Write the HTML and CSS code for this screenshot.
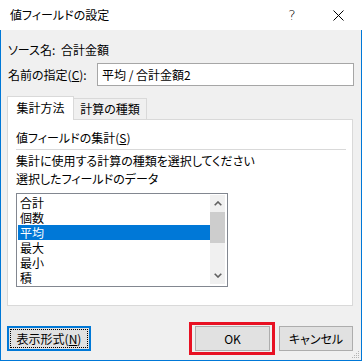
FILE: index.html
```html
<!DOCTYPE html>
<html lang="ja">
<head>
<meta charset="utf-8">
<title>値フィールドの設定</title>
<link rel="stylesheet" href="styles.css">
</head>
<body>
<div class="window">
  <div class="titlebar">
    <span class="title">値フィールドの設定</span>
    <span class="tb-btn help">?</span>
    <span class="tb-btn close">
      <svg width="11" height="11" viewBox="0 0 11 11"><path d="M0.5 0.5 L10.5 10.5 M10.5 0.5 L0.5 10.5" stroke="#000" stroke-width="1" fill="none"/></svg>
    </span>
  </div>
  <div class="body">
    <div class="row source"><span class="lbl-src">ソース名:</span><span>合計金額</span></div>
    <div class="row name"><span class="lbl-name">名前の指定(<u>C</u>):</span><div class="input">平均 / 合計金額2</div></div>
    <div class="tabs">
      <div class="tab active">集計方法</div>
      <div class="tab">計算の種類</div>
    </div>
    <div class="panel">
      <div class="group-title">値フィールドの集計(<u>S</u>)</div>
      <div class="sep"></div>
      <div class="text first">集計に使用する計算の種類を選択してください</div>
      <div class="text">選択したフィールドのデータ</div>
      <div class="listbox">
        <ul class="items">
          <li>合計</li>
          <li>個数</li>
          <li class="sel">平均</li>
          <li>最大</li>
          <li>最小</li>
          <li>積</li>
        </ul>
        <div class="scrollbar">
          <div class="arrow"><svg width="8" height="5" viewBox="0 0 8 5"><path d="M0.7 4.3 L4 1 L7.3 4.3" stroke="#606060" stroke-width="1.6" fill="none"/></svg></div>
          <div class="thumb"></div>
          <div class="track"></div>
          <div class="arrow"><svg width="8" height="5" viewBox="0 0 8 5"><path d="M0.7 0.7 L4 4 L7.3 0.7" stroke="#606060" stroke-width="1.6" fill="none"/></svg></div>
        </div>
      </div>
    </div>
    <div class="buttons">
      <button class="btn default">表示形式(<u>N</u>)</button>
      <div class="spacer"></div>
      <div class="ok-wrap">
        <button class="btn ok">OK</button>
        <span class="highlight"></span>
      </div>
      <button class="btn cancel">キャンセル</button>
    </div>
    <svg class="grip" width="8" height="8" viewBox="0 0 8 8">
      <rect x="6" y="0" width="1" height="1" fill="#b4b4b4"/>
      <rect x="4" y="2" width="1" height="1" fill="#b4b4b4"/>
      <rect x="6" y="2" width="1" height="1" fill="#b4b4b4"/>
      <rect x="2" y="4" width="1" height="1" fill="#b4b4b4"/>
      <rect x="4" y="4" width="1" height="1" fill="#b4b4b4"/>
      <rect x="6" y="4" width="1" height="1" fill="#b4b4b4"/>
      <rect x="0" y="6" width="1" height="1" fill="#b4b4b4"/>
      <rect x="2" y="6" width="1" height="1" fill="#b4b4b4"/>
      <rect x="4" y="6" width="1" height="1" fill="#b4b4b4"/>
      <rect x="6" y="6" width="1" height="1" fill="#b4b4b4"/>
    </svg>
  </div>
</div>
</body>
</html>
```

FILE: styles.css
```css
* { box-sizing: border-box; }
html, body { margin: 0; padding: 0; }
body {
  width: 362px;
  height: 361px;
  font-family: "Noto Sans CJK JP", sans-serif;
  font-size: 12px;
  color: #000;
  font-feature-settings: "palt";
  overflow: hidden;
}
u { text-decoration: underline; text-underline-offset: 1px; }

.window {
  width: 362px;
  height: 361px;
  display: flex;
  flex-direction: column;
  background: #f0f0f0;
}

.titlebar {
  height: 30px;
  flex-shrink: 0;
  background: #fff;
  display: flex;
  align-items: center;
}
.title { flex: 1; padding-left: 10px; line-height: 16px; }
.tb-btn {
  width: 46px;
  height: 30px;
  display: flex;
  align-items: center;
  justify-content: center;
}
.help { font-family: "DejaVu Sans", sans-serif; font-size: 14px; font-weight: 300; }
.close { margin-right: 1px; }

.body {
  flex: 1;
  position: relative;
  display: flex;
  flex-direction: column;
  border: 1px solid #0078d7;
  border-top: none;
  padding: 0 8px 0 6px;
}

.row { display: flex; align-items: center; padding-left: 1px; }
.source { margin-top: 12px; height: 16px; line-height: 16px; }
.lbl-src { width: 53px; }
.name { margin-top: 5px; height: 23px; }
.lbl-name { width: 89px; line-height: 16px; }
.input {
  flex: 1;
  height: 23px;
  margin-right: -1px;
  border: 1px solid #a6a6a6;
  background: #fff;
  padding-left: 4px;
  line-height: 21px;
}

.tabs {
  margin-top: 10px;
  height: 23px;
  display: flex;
  align-items: flex-end;
}
.tab {
  height: 21px;
  width: 74px;
  margin-left: -1px;
  border: 1px solid #d9d9d9;
  border-bottom: none;
  background: #f0f0f0;
  text-align: center;
  line-height: 20px;
}
.tab.active {
  height: 24px;
  width: 67px;
  margin-left: 0;
  margin-bottom: -1px;
  background: #fff;
  line-height: 22px;
  position: relative;
  z-index: 1;
}

.panel {
  height: 187px;
  border: 1px solid #d9d9d9;
  background: #fff;
  padding: 10px 6px 0 8px;
}
.group-title { line-height: 16px; }
.sep { margin-top: 3px; height: 1px; background: #d9d9d9; }
.text { line-height: 18px; }
.text.first { margin-top: 2px; }

.listbox {
  margin-top: 5px;
  width: 212px;
  height: 94px;
  border: 1px solid #828790;
  padding: 1px;
  background: #fff;
  display: flex;
}
.items { flex: 1; list-style: none; margin: 0; padding: 0; }
.items li { height: 15px; line-height: 15px; padding-left: 2px; }
.items li.sel { background: #0078d7; color: #fff; }
.scrollbar {
  width: 15px;
  height: 89px;
  margin-right: 1px;
  background: #f0f0f0;
  display: flex;
  flex-direction: column;
}
.arrow {
  height: 17px;
  display: flex;
  align-items: center;
  justify-content: center;
}
.thumb { height: 31px; background: #cdcdcd; }
.track { flex: 1; }

.buttons {
  margin-top: 20px;
  display: flex;
  align-items: flex-start;
}
.spacer { flex: 1; }
.btn {
  height: 25px;
  padding: 0;
  margin: 0;
  font: inherit;
  color: #000;
  background: #e1e1e1;
  border: 1px solid #adadad;
  border-radius: 0;
  line-height: 16px;
}
.btn.default {
  width: 84px;
  border: 2px solid #0078d7;
  outline: 1px dotted #000;
  outline-offset: -4px;
}
.ok-wrap { position: relative; margin-right: 9px; }
.btn.ok { width: 75px; display: block; }
.btn.cancel { width: 74px; }
.highlight {
  position: absolute;
  top: -4px;
  left: -6px;
  width: 86px;
  height: 33px;
  border: 3px solid #e81123;
}

.grip { position: absolute; right: 1px; bottom: 1px; }
```
